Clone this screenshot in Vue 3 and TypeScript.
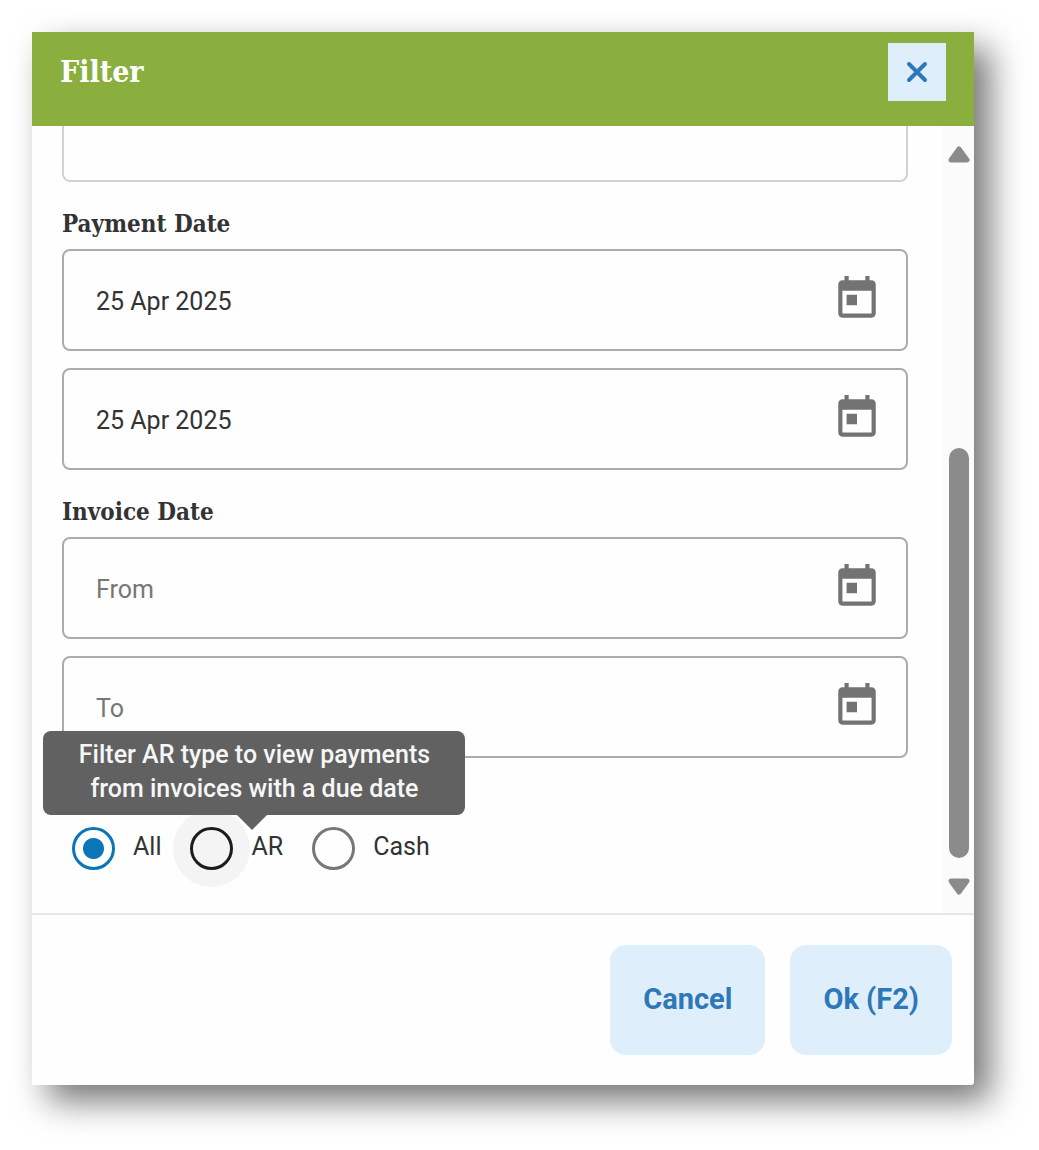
<script setup lang="ts">
import { ref } from 'vue'

interface DateField {
  id: string
  label: string
  placeholder: string
  value: string
}

interface DateGroup {
  title: string
  fields: DateField[]
}

const groups = ref<DateGroup[]>([
  {
    title: 'Payment Date',
    fields: [
      { id: 'payment-from', label: 'Payment date from', placeholder: 'From', value: '25 Apr 2025' },
      { id: 'payment-to', label: 'Payment date to', placeholder: 'To', value: '25 Apr 2025' },
    ],
  },
  {
    title: 'Invoice Date',
    fields: [
      { id: 'invoice-from', label: 'Invoice date from', placeholder: 'From', value: '' },
      { id: 'invoice-to', label: 'Invoice date to', placeholder: 'To', value: '' },
    ],
  },
])

const types = ['All', 'AR', 'Cash']
const selectedType = ref('All')
const hoveredType = ref('AR')
const search = ref('')
</script>

<template>
  <main class="page">
    <section class="dialog" role="dialog" aria-labelledby="dialog-title">
      <header class="header">
        <h1 id="dialog-title" class="title">Filter</h1>
        <button class="close" type="button" aria-label="Close">
          <svg width="22" height="22" viewBox="0 0 22 22" aria-hidden="true">
            <path d="M3 3L19 19M19 3L3 19" fill="none" stroke="currentColor" stroke-width="4" stroke-linecap="round" />
          </svg>
        </button>
      </header>

      <div class="body">
        <form class="content" @submit.prevent>
          <input v-model="search" class="cut-field" type="text" aria-label="Search" />

          <fieldset v-for="group in groups" :key="group.title" class="group">
            <legend class="legend">{{ group.title }}</legend>
            <div v-for="field in group.fields" :key="field.id" class="field">
              <input
                :id="field.id"
                v-model="field.value"
                class="date"
                type="text"
                :aria-label="field.label"
                :placeholder="field.placeholder"
              />
              <button class="picker" type="button" aria-label="Open calendar">
                <svg width="50" height="50" viewBox="0 0 24 24" aria-hidden="true">
                  <path
                    fill="currentColor"
                    d="M19 3h-1V1h-2v2H8V1H6v2H5c-1.11 0-1.99.9-1.99 2L3 19c0 1.1.89 2 2 2h14c1.1 0 2-.9 2-2V5c0-1.1-.9-2-2-2zm0 16H5V8h14v11zM7 10h5v5H7z"
                  />
                </svg>
              </button>
            </div>
          </fieldset>

          <div class="types" role="radiogroup" aria-label="Payment type">
            <label v-for="type in types" :key="type" class="type" :class="{ hovered: type === hoveredType }">
              <input v-model="selectedType" class="radio" type="radio" name="type" :value="type" />
              <span class="type-name">{{ type }}</span>
              <span v-if="type === hoveredType" class="tooltip" role="tooltip">
                Filter AR type to view payments<br />from invoices with a due date
              </span>
            </label>
          </div>
        </form>

        <div class="scrollbar" aria-hidden="true">
          <svg width="22" height="17" viewBox="0 0 22 17">
            <path d="M11 3L19 14H3Z" fill="currentColor" stroke="currentColor" stroke-width="5" stroke-linejoin="round" />
          </svg>
          <div class="track">
            <div class="thumb"></div>
          </div>
          <svg width="22" height="17" viewBox="0 0 22 17">
            <path d="M11 14L19 3H3Z" fill="currentColor" stroke="currentColor" stroke-width="5" stroke-linejoin="round" />
          </svg>
        </div>
      </div>

      <footer class="footer">
        <button class="action" type="button">Cancel</button>
        <button class="action" type="button">Ok (F2)</button>
      </footer>
    </section>
  </main>
</template>

<style>
body {
  margin: 0;
  background: #fff;
}
</style>

<style scoped>
.page {
  box-sizing: border-box;
  padding: 32px 65px 65px 32px;
  font-family: Roboto, 'Liberation Sans', sans-serif;
  font-size: 25px;
  line-height: 34px;
  color: #333;
}

.page * {
  box-sizing: border-box;
}

.page button,
.page input {
  font: inherit;
}

.dialog {
  background: #fefefe;
  border-radius: 0 0 3px 0;
  box-shadow: 16px 16px 34px rgba(0, 0, 0, 0.54);
}

.header {
  display: flex;
  align-items: center;
  justify-content: space-between;
  padding: 11px 28px 25px;
  background: #8aaf3f;
}

.title {
  margin: 0;
  font-family: 'Roboto Slab', 'DejaVu Serif Condensed', 'DejaVu Serif', serif;
  font-size: 30px;
  font-weight: 600;
  color: #fff;
}

.close {
  display: grid;
  place-items: center;
  width: 58px;
  height: 58px;
  padding: 0;
  border: 0;
  background: #dfeefb;
  color: #2e77b8;
}

.body {
  display: flex;
}

.content {
  flex: 1;
  padding: 0 34px 43px 30px;
}

.cut-field {
  display: block;
  width: 100%;
  height: 56px;
  padding: 0 32px;
  border: 2px solid #d2d2d2;
  border-top: 0;
  border-radius: 0 0 8px 8px;
  background: transparent;
}

.group {
  min-width: 0;
  margin: 0;
  padding: 0;
  border: 0;
}

.legend {
  padding: 25px 0 8px;
  font-family: 'Roboto Slab', 'DejaVu Serif Condensed', 'DejaVu Serif', serif;
  font-size: 24px;
  font-weight: 700;
}

.field {
  display: flex;
  align-items: center;
  height: 102px;
  padding-right: 24px;
  border: 2px solid #acacac;
  border-radius: 8px;
}

.field + .field {
  margin-top: 17px;
}

.date {
  flex: 1;
  min-width: 0;
  height: 100%;
  padding: 2px 0 0 32px;
  border: 0;
  outline: 0;
  background: transparent;
  color: #333;
}

.date::placeholder {
  color: #777;
  opacity: 1;
}

.picker {
  display: flex;
  padding: 0 0 2px;
  border: 0;
  background: transparent;
  color: #737373;
}

.types {
  display: flex;
  gap: 29px;
  margin-top: 69px;
  padding-left: 10px;
}

.type {
  position: relative;
  display: flex;
  align-items: center;
  gap: 18px;
}

.type-name {
  padding-bottom: 3px;
}

.radio {
  appearance: none;
  width: 43px;
  height: 43px;
  margin: 0;
  border: 3px solid #777;
  border-radius: 50%;
}

.radio:checked {
  border-color: #0b76b7;
  background: radial-gradient(circle, #0b76b7 10px, transparent 11px);
}

.hovered .radio {
  border-color: #1c1c1c;
  background: #f4f4f4;
  box-shadow: 0 0 0 17px #f4f4f4;
}

.tooltip {
  position: absolute;
  bottom: calc(100% + 12px);
  left: -147px;
  width: 422px;
  padding: 7px 0 9px;
  border-radius: 8px;
  background: #616161;
  color: #f6f6f6;
  font-weight: 500;
  text-align: center;
}

.tooltip::after {
  content: '';
  position: absolute;
  top: 100%;
  left: 50%;
  margin-left: -17px;
  border: 15px solid transparent;
  border-top-color: #616161;
  border-bottom: 0;
}

.scrollbar {
  display: flex;
  flex-direction: column;
  align-items: center;
  width: 32px;
  padding: 20px 0 18px 2px;
  background: #fbfbfb;
  color: #8b8b8b;
}

.track {
  flex: 1;
  display: flex;
  flex-direction: column;
  justify-content: flex-end;
  padding-bottom: 20px;
}

.thumb {
  width: 20px;
  height: 59%;
  border-radius: 10px;
  background: #8b8b8b;
}

.footer {
  display: flex;
  justify-content: flex-end;
  gap: 25px;
  padding: 30px 22px;
  border-top: 2px solid #e4e7ea;
}

.action {
  height: 110px;
  padding: 0 33px 2px;
  border: 0;
  border-radius: 16px;
  background: #dfeefb;
  color: #2e77b8;
}

.page .action {
  font-size: 29px;
  font-weight: 700;
}
</style>
